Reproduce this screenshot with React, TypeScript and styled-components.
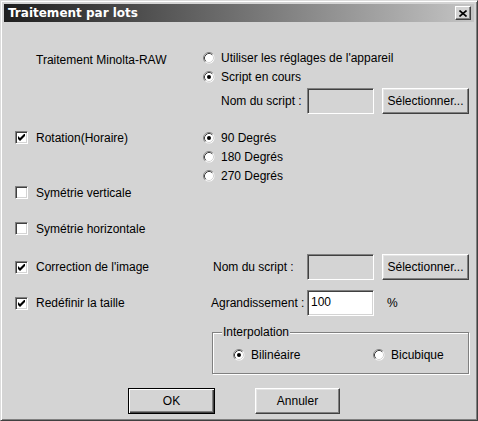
import React from 'react';
import styled, { createGlobalStyle } from 'styled-components';

const GlobalStyle = createGlobalStyle`
  html, body {
    margin: 0;
    padding: 0;
    background: #d4d4d4;
  }
  body {
    font-family: 'Liberation Sans', Arial, sans-serif;
    font-size: 12px;
    color: #000;
  }
`;

const Dialog = styled.div`
  box-sizing: border-box;
  width: 478px;
  height: 421px;
  background: #d4d4d4;
  border: 1px solid;
  border-color: #dcdcdc #404040 #404040 #dcdcdc;
  box-shadow: inset 1px 1px 0 #fff, inset -1px -1px 0 #808080;
  padding: 3px;
  display: flex;
  flex-direction: column;
`;

const TitleBar = styled.div`
  height: 18px;
  flex: none;
  display: flex;
  align-items: center;
  justify-content: space-between;
  padding: 0 3px 0 4px;
  background: linear-gradient(to right, #1e1e1e, #c4c4c4);
`;

const Title = styled.span`
  font-family: 'DejaVu Sans', Tahoma, sans-serif;
  font-weight: bold;
  font-size: 12px;
  color: #fff;
`;

const CloseButton = styled.div`
  box-sizing: border-box;
  width: 16px;
  height: 14px;
  background: #d4d4d4;
  border: 1px solid;
  border-color: #fff #404040 #404040 #fff;
  box-shadow: inset -1px -1px 0 #808080;
  display: flex;
  align-items: center;
  justify-content: center;
`;

const Body = styled.div`
  display: flex;
  flex-direction: column;
  padding: 26px 5px 0 11px;
`;

const Row = styled.div<{ $h: number; $mt?: number; $align?: string }>`
  display: grid;
  grid-template-columns: 188px 1fr;
  height: ${(p) => p.$h}px;
  margin-top: ${(p) => p.$mt ?? 0}px;
  align-items: ${(p) => p.$align ?? 'center'};
`;

const PlainLabel = styled.div`
  padding: 3px 0 0 21px;
  line-height: 19px;
  white-space: nowrap;
`;

const CheckItem = styled.label`
  display: flex;
  align-items: center;
  gap: 8px;
  height: 19px;
  white-space: nowrap;
`;

const CheckBoxBox = styled.span`
  box-sizing: border-box;
  width: 13px;
  height: 13px;
  flex: none;
  background: #fff;
  border: 1px solid;
  border-color: #808080 #fff #fff #808080;
  box-shadow: inset 1px 1px 0 #404040, inset -1px -1px 0 #d4d4d4;
  display: flex;
  align-items: center;
  justify-content: center;
`;

const RadioStack = styled.div`
  display: flex;
  flex-direction: column;
`;

const RadioItem = styled.label`
  display: flex;
  align-items: center;
  gap: 6px;
  height: 19px;
  white-space: nowrap;
`;

const FieldGrid = styled.div`
  display: grid;
  grid-template-columns: 104px 67px auto;
  align-items: center;
`;

const FieldLabel = styled.span<{ $indent: number }>`
  padding-left: ${(p) => p.$indent}px;
  white-space: nowrap;
`;

const TextField = styled.div<{ $white?: boolean }>`
  box-sizing: border-box;
  height: 26px;
  padding: 3px 3px 0;
  background: ${(p) => (p.$white ? '#fff' : '#d4d4d4')};
  border: 1px solid;
  border-color: #808080 #fff #fff #808080;
  box-shadow: inset 1px 1px 0 #404040, inset -1px -1px 0 #d4d4d4;
  line-height: 16px;
`;

const Button = styled.div<{ $w: number; $default?: boolean; $ml?: number }>`
  box-sizing: border-box;
  width: ${(p) => p.$w}px;
  height: 26px;
  margin-left: ${(p) => p.$ml ?? 0}px;
  display: flex;
  align-items: center;
  justify-content: center;
  background: #d4d4d4;
  ${(p) =>
    p.$default
      ? `border: 1px solid #000;
         box-shadow: inset 1px 1px 0 #fff, inset -1px -1px 0 #404040, inset -2px -2px 0 #808080;`
      : `border: 1px solid;
         border-color: #fff #404040 #404040 #fff;
         box-shadow: inset -1px -1px 0 #808080, inset 1px 1px 0 #e4e4e4;`}
`;

const Percent = styled.span`
  margin-left: 13px;
`;

const GroupBox = styled.div`
  position: relative;
  box-sizing: border-box;
  margin-left: 9px;
  width: 257px;
  height: 42px;
  border: 1px solid #808080;
  box-shadow: inset 1px 1px 0 #fff, 1px 1px 0 #fff;
  padding: 12px 0 0 20px;
  display: grid;
  grid-template-columns: 140px auto;
`;

const GroupLabel = styled.span`
  position: absolute;
  top: -8px;
  left: 9px;
  padding: 0 1px;
  background: #d4d4d4;
  line-height: 14px;
`;

const ButtonRow = styled.div`
  display: flex;
  gap: 40px;
  margin-top: 14px;
  padding-left: 113px;
`;

const Radio = ({ checked }: { checked?: boolean }) => (
  <svg width="12" height="12" viewBox="0 0 12 12" style={{ flex: 'none' }}>
    <circle cx="6" cy="6" r="5.5" fill="#fff" />
    <path d="M2.11 9.89 A5.5 5.5 0 0 1 9.89 2.11" stroke="#808080" fill="none" />
    <path d="M2.82 9.18 A4.5 4.5 0 0 1 9.18 2.82" stroke="#404040" fill="none" />
    <path d="M9.18 2.82 A4.5 4.5 0 0 1 2.82 9.18" stroke="#d4d4d4" fill="none" />
    {checked && <circle cx="6" cy="6" r="2" fill="#000" />}
  </svg>
);

const CheckBox = ({ checked }: { checked?: boolean }) => (
  <CheckBoxBox>
    {checked && (
      <svg width="7" height="7" viewBox="0 0 7 7">
        <polygon points="0,2 2,4 7,-1 7,2 2,7 0,5" fill="#000" />
      </svg>
    )}
  </CheckBoxBox>
);

export default function App() {
  return (
    <>
      <GlobalStyle />
      <Dialog>
        <TitleBar>
          <Title>Traitement par lots</Title>
          <CloseButton>
            <svg width="8" height="7" viewBox="0 0 8 7">
              <path d="M0.5 0.5 L7.5 6.5 M7.5 0.5 L0.5 6.5" stroke="#000" strokeWidth="1.6" />
            </svg>
          </CloseButton>
        </TitleBar>
        <Body>
          <Row $h={38} $align="start">
            <PlainLabel>Traitement Minolta-RAW</PlainLabel>
            <RadioStack>
              <RadioItem><Radio />Utiliser les réglages de l'appareil</RadioItem>
              <RadioItem><Radio checked />Script en cours</RadioItem>
            </RadioStack>
          </Row>
          <Row $h={30}>
            <div />
            <FieldGrid>
              <FieldLabel $indent={18}>Nom du script :</FieldLabel>
              <TextField />
              <Button $w={87} $ml={8}>Sélectionner...</Button>
            </FieldGrid>
          </Row>
          <Row $h={55} $mt={12} $align="start">
            <CheckItem><CheckBox checked />Rotation(Horaire)</CheckItem>
            <RadioStack>
              <RadioItem><Radio checked />90 Degrés</RadioItem>
              <RadioItem><Radio />180 Degrés</RadioItem>
              <RadioItem><Radio />270 Degrés</RadioItem>
            </RadioStack>
          </Row>
          <Row $h={19}>
            <CheckItem><CheckBox />Symétrie verticale</CheckItem>
          </Row>
          <Row $h={19} $mt={17}>
            <CheckItem><CheckBox />Symétrie horizontale</CheckItem>
          </Row>
          <Row $h={28} $mt={15}>
            <CheckItem><CheckBox checked />Correction de l'image</CheckItem>
            <FieldGrid>
              <FieldLabel $indent={10}>Nom du script :</FieldLabel>
              <TextField />
              <Button $w={87} $ml={8}>Sélectionner...</Button>
            </FieldGrid>
          </Row>
          <Row $h={28} $mt={8}>
            <CheckItem><CheckBox checked />Redéfinir la taille</CheckItem>
            <FieldGrid>
              <FieldLabel $indent={8}>Agrandissement :</FieldLabel>
              <TextField $white>100</TextField>
              <Percent>%</Percent>
            </FieldGrid>
          </Row>
          <Row $h={42} $mt={15}>
            <div />
            <GroupBox>
              <GroupLabel>Interpolation</GroupLabel>
              <RadioItem><Radio checked />Bilinéaire</RadioItem>
              <RadioItem><Radio />Bicubique</RadioItem>
            </GroupBox>
          </Row>
          <ButtonRow>
            <Button $w={87} $default>OK</Button>
            <Button $w={85}>Annuler</Button>
          </ButtonRow>
        </Body>
      </Dialog>
    </>
  );
}
